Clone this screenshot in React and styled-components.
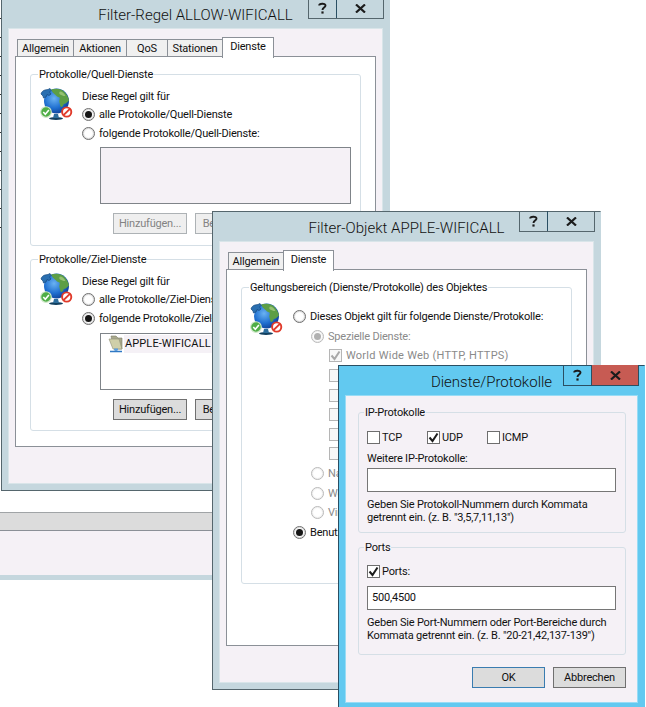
import React from 'react'
import styled, { createGlobalStyle } from 'styled-components'

const GlobalStyle = createGlobalStyle`
    html, body {
        margin: 0;
        height: 707px;
        overflow: hidden;
        background: #fff;
    }
    body {
        font-family: Roboto, "Open Sans", sans-serif;
        font-size: 11px;
        letter-spacing: -0.2px;
        color: #111;
    }
`

const Desktop = styled.div`
    position: relative;
    width: 646px;
    height: 707px;
    overflow: hidden;
`

// windows on a desktop, their place is the content
const Window = styled.section`
    position: absolute;
    left: ${p => p.$x}px;
    top: ${p => p.$y}px;
    width: ${p => p.$w}px;
    height: ${p => p.$h}px;
    box-sizing: border-box;
    display: flex;
    flex-direction: column;
    background: ${p => p.$frame};
    border: 1px solid ${p => p.$edge};
    border-right-color: ${p => p.$frame};
`

const TitleBar = styled.header`
    height: 30px;
    box-sizing: border-box;
    padding-top: 2px;
    flex: none;
    display: flex;
    align-items: center;
    justify-content: center;
    font-size: 15px;
    font-weight: 300;
    letter-spacing: 0;
    color: #111;
`

const Caption = styled.div`
    position: absolute;
    top: -1px;
    right: 5px;
    display: flex;
    height: 21px;
    box-sizing: border-box;
    border: 1px solid ${p => p.$edge};
    border-top: none;
`

const CaptionButton = styled.div`
    width: ${p => p.$wide ? 46 : 27}px;
    display: flex;
    align-items: center;
    justify-content: center;
    background: ${p => p.$bg || 'transparent'};
    & + & { border-left: 1px solid ${p => p.$edge}; }
    svg { display: block; }
`

const Client = styled.div`
    flex: 1;
    min-height: 0;
    margin: 0 7px 7px;
    box-sizing: border-box;
    padding: ${p => p.$pad};
    background: #f5f1f6;
    outline: 1px solid rgba(255, 255, 255, 0.35);
`

const TabStrip = styled.div`
    display: flex;
    align-items: flex-end;
    height: 21px;
    padding-left: 2px;
    position: relative;
    z-index: 1;
`

const Tab = styled.div`
    box-sizing: border-box;
    width: ${p => p.$w}px;
    height: ${p => p.$active ? 21 : 18}px;
    margin-bottom: ${p => p.$active ? -1 : 0}px;
    display: flex;
    align-items: center;
    justify-content: center;
    padding-bottom: ${p => p.$active ? 4 : 0}px;
    background: ${p => p.$active ? '#fff' : '#f0f0f0'};
    border: 1px solid #8b9097;
    border-bottom: ${p => p.$active ? 'none' : '1px solid #8b9097'};
    margin-right: ${p => p.$active ? 0 : -1}px;
`

const TabPage = styled.div`
    box-sizing: border-box;
    height: ${p => p.$h}px;
    background: #fff;
    border: 1px solid #8b9097;
    padding: 9px 14px 0;
    margin-top: -1px;
`

const Group = styled.fieldset`
    box-sizing: border-box;
    height: ${p => p.$h}px;
    margin: 0 0 ${p => p.$after || 0}px;
    padding: ${p => p.$pad};
    border: 1px solid #d5dfe6;
    border-radius: 3px;
    min-width: 0;
`

const Legend = styled.legend`
    height: 16px;
    line-height: 18px;
    padding: 0 1px;
    margin-left: ${p => p.$ml}px;
    white-space: nowrap;
`

const GroupBody = styled.div`
    display: flex;
    gap: ${p => p.$gap}px;
    align-items: flex-start;
`

const Rows = styled.div`
    flex: 1;
    min-width: 0;
    padding-top: ${p => p.$top || 0}px;
`

const IconCell = styled.div`
    flex: none;
    padding-top: ${p => p.$top}px;
`

const Line = styled.div`
    height: 16px;
    line-height: 17px;
    white-space: nowrap;
    margin-top: ${p => p.$top || 0}px;
`

const OptionRow = styled.div`
    display: flex;
    align-items: center;
    gap: 4px;
    height: ${p => p.$h || 18}px;
    margin-top: ${p => p.$top || 0}px;
    padding-left: ${p => p.$indent || 0}px;
    white-space: nowrap;
    color: ${p => p.$off ? '#8a8a8a' : 'inherit'};
`

const WideLabel = styled.span`
    letter-spacing: 0.25px;
`

const RadioMark = styled.span`
    flex: none;
    box-sizing: border-box;
    width: 13px;
    height: 13px;
    border-radius: 50%;
    display: flex;
    align-items: center;
    justify-content: center;
    border: 1px solid ${p => p.$off ? '#b9b9b9' : '#6e6e6e'};
    background: #fff;
    box-shadow: inset 0 0 1px 1px ${p => p.$off ? '#eee' : '#d8d8d8'};
    &::after {
        content: '';
        display: ${p => p.$on ? 'block' : 'none'};
        width: 7px;
        height: 7px;
        border-radius: 50%;
        background: ${p => p.$off ? '#b0b0b0' : '#151515'};
    }
`

const CheckMark = styled.span`
    flex: none;
    box-sizing: border-box;
    width: 13px;
    height: 13px;
    display: flex;
    align-items: center;
    justify-content: center;
    border: 1px solid ${p => p.$off ? '#b5b5b5' : '#6e6e6e'};
    background: ${p => p.$off ? '#f8f8f8' : '#fff'};
    svg { display: block; }
`

const ListBox = styled.div`
    box-sizing: border-box;
    height: ${p => p.$h}px;
    margin: ${p => p.$top}px 0 0 18px;
    background: ${p => p.$off ? '#f5f1f6' : '#fff'};
    border: 1px solid #7f8489;
    padding: 1px 6px;
`

const ListItem = styled.div`
    display: flex;
    align-items: center;
    height: 18px;
    white-space: nowrap;
`

const ItemText = styled.span`
    background: #f5f1f6;
    padding: 0 8px 0 1px;
    height: 18px;
    line-height: 18px;
    letter-spacing: 0.1px;
`

const ButtonRow = styled.div`
    display: flex;
    justify-content: flex-end;
    gap: 8px;
    margin-top: ${p => p.$top}px;
`

const Button = styled.div`
    box-sizing: border-box;
    width: ${p => p.$w || 74}px;
    height: 21px;
    display: flex;
    align-items: center;
    justify-content: center;
    background: ${p => p.$off ? '#efefef' : '#dcdcdc'};
    border: 1px solid ${p => p.$off ? '#adb2b5' : p.$primary ? '#3a7cb0' : '#707070'};
    color: ${p => p.$off ? '#838383' : '#111'};
`

const CheckRow = styled.div`
    display: flex;
    margin-top: ${p => p.$top || 0}px;
`

const CheckItem = styled.div`
    width: ${p => p.$w || 60}px;
    height: 18px;
    display: flex;
    align-items: center;
    gap: 2px;
`

const TextField = styled.div`
    box-sizing: border-box;
    height: 24px;
    margin-top: ${p => p.$top}px;
    background: #fff;
    border: 1px solid #767676;
    padding: 0 4px;
    line-height: 22px;
`

const Help = styled.p`
    margin: ${p => p.$top}px 0 0;
    line-height: 13px;
    white-space: nowrap;
`

const StubWindow = styled.div`
    position: absolute;
    left: 0;
    top: 512px;
    width: 212px;
    height: 68px;
    box-sizing: border-box;
    background: #f5f1f6;
    border-top: 1px solid #a0a4a6;
    border-bottom: 5px solid #c5d7de;
    &::before {
        content: '';
        display: block;
        height: 17px;
        background: #dcdcdc;
        border-bottom: 1px solid #8b9097;
    }
`

// ticks of the window behind, showing along the left edge
const EdgeTicks = styled.div`
    position: absolute;
    left: 0;
    top: 0;
    width: 1px;
    height: 236px;
    background: repeating-linear-gradient(to bottom, transparent 0 18px, #333 18px 19px);
`

const Globe = () => (
    <svg width="33" height="34" viewBox="0 0 33 34" style={{ display: 'block' }}>
        <defs>
            <radialGradient id="sea" cx="40%" cy="40%" r="65%">
                <stop offset="0" stopColor="#6ab2f2" />
                <stop offset="0.6" stopColor="#1f6fd0" />
                <stop offset="1" stopColor="#0d3f95" />
            </radialGradient>
        </defs>
        <ellipse cx="16" cy="30.5" rx="7" ry="1.5" fill="#12405f" />
        <path d="M13 30h6l-1-4h-4z" fill="#2c6d9c" />
        <circle cx="16.5" cy="13" r="12.5" fill="url(#sea)" />
        <path d="M11 1.500c5-1.500 10-1 13 2 2.500 2.500 4.500 5.500 5 9-1.500 1-2.500 3-5 3.500-1 .3-.5 2.500-2.500 3-1.500 0-1.500-3-2-4.500-1-2 1-3 0-5-2-.5-3-1.500-4.500-3-1.500-1.500-3-2.500-4-5z" fill="#5d9e45" />
        <path d="M20 3.500c2 0 4.500 2 5.500 4.500-2 .5-3.500-1-5.500-1.500-1-1-1-2 0-3z" fill="#95c172" />
        <path d="M1 6c.5-2 2-3.500 4-4l3-.5 2-1 1 2-1.500 1.500 1.500 2-2 1.500-2-1-1 2.500-2.500 1-.5-2z" fill="#2a6fb0" stroke="#14497f" strokeWidth="0.7" />
        <circle cx="6" cy="24" r="5.300" fill="#4fae46" stroke="#cfe6c8" strokeWidth="1.100" />
        <path d="M3.300 24l2 2.200 3.600-4.200" fill="none" stroke="#fff" strokeWidth="1.600" />
        <circle cx="26.700" cy="24" r="4.600" fill="#fff" stroke="#e03a2a" strokeWidth="1.900" />
        <path d="M23.500 27.200l6.400-6.400" stroke="#e03a2a" strokeWidth="1.900" />
    </svg>
)

const FolderNet = () => (
    <svg width="17" height="18" viewBox="0 0 17 18" style={{ flex: 'none', display: 'block' }}>
        <path d="M4 1h5l2 2h4v11H7z" fill="#a9a98c" stroke="#7c7c68" strokeWidth="0.6" />
        <path d="M2 4h10l3 10H6z" fill="#cfcfa9" stroke="#8e8e75" strokeWidth="0.6" />
        <path d="M9 14v2M3 16.500h12" stroke="#2f78c4" strokeWidth="1.300" />
        <rect x="7" y="13.500" width="4" height="2" fill="#5fa0de" />
    </svg>
)

const Tick = ({ color = '#1c1c1c' }) => (
    <svg width="11" height="11" viewBox="0 0 11 11">
        <path d="M1.500 5.500l3 3.500 5-7.500" fill="none" stroke={color} strokeWidth="2" />
    </svg>
)

const CaptionControls = ({ edge, closeBg }) => (
    <Caption $edge={edge}>
        <CaptionButton $edge={edge}>
            <svg width="9" height="12" viewBox="0 0 9 12">
                <path d="M1.200 3.500C1.200 1.500 7.500.800 7.500 3.500c0 2-3 2.200-3 4.500" fill="none" stroke="#1c1c1c" strokeWidth="1.900" />
                <rect x="3.400" y="9.400" width="2.200" height="2.200" fill="#1c1c1c" />
            </svg>
        </CaptionButton>
        <CaptionButton $edge={edge} $wide $bg={closeBg}>
            <svg width="11" height="9" viewBox="0 0 11 9">
                <path d="M1 .5l9 8M10 .5l-9 8" stroke="#1c1c1c" strokeWidth="2.200" />
            </svg>
        </CaptionButton>
    </Caption>
)

const Radio = ({ on, off, indent, label }) => (
    <OptionRow $indent={indent} $off={off} $h={19.6}>
        <RadioMark $on={on} $off={off} />
        {label}
    </OptionRow>
)

const RuleGroup = ({ title, after, anyLabel, someLabel, anyOn, listTop, listHeight, off, children }) => (
    <Group $h={180} $after={after} $pad="0 9px">
        <Legend $ml={-2}>{title}</Legend>
        <GroupBody $gap={9}>
            <IconCell $top={6}><Globe /></IconCell>
            <Rows $top={6}>
                <Line>Diese Regel gilt für</Line>
                <OptionRow $top={1}>
                    <RadioMark $on={anyOn} />
                    {anyLabel}
                </OptionRow>
                <OptionRow $top={1}>
                    <RadioMark $on={!anyOn} />
                    {someLabel}
                </OptionRow>
                <ListBox $h={listHeight} $top={listTop} $off={off}>{children}</ListBox>
                <ButtonRow $top={9}>
                    <Button $off={off}>Hinzufügen...</Button>
                    <Button $off={off}>Bearbeiten...</Button>
                    <Button $off={off}>{off ? null : 'Entfernen'}</Button>
                </ButtonRow>
            </Rows>
        </GroupBody>
    </Group>
)

const App = () => {
    const grey = { frame: '#c5d7de', edge: '#55666d' }
    return (
        <Desktop>
            <GlobalStyle />
            <EdgeTicks />
            <StubWindow />

            <Window $x={1} $y={-2} $w={389} $h={493} $frame={grey.frame} $edge={grey.edge}>
                <TitleBar>Filter-Regel ALLOW-WIFICALL</TitleBar>
                <CaptionControls edge={grey.edge} />
                <Client $pad="7px 6px 0">
                    <TabStrip>
                        <Tab $w={57}>Allgemein</Tab>
                        <Tab $w={54}>Aktionen</Tab>
                        <Tab $w={42}>QoS</Tab>
                        <Tab $w={56}>Stationen</Tab>
                        <Tab $w={52} $active>Dienste</Tab>
                    </TabStrip>
                    <TabPage $h={391}>
                        <RuleGroup
                            title="Protokolle/Quell-Dienste"
                            after={5}
                            anyLabel="alle Protokolle/Quell-Dienste"
                            someLabel="folgende Protokolle/Quell-Dienste:"
                            anyOn
                            listTop={5}
                            listHeight={57}
                            off
                        />
                        <RuleGroup
                            title="Protokolle/Ziel-Dienste"
                            anyLabel="alle Protokolle/Ziel-Dienste"
                            someLabel="folgende Protokolle/Ziel-Dienste:"
                            listTop={6}
                            listHeight={57}
                        >
                            <ListItem><FolderNet /><ItemText>APPLE-WIFICALL</ItemText></ListItem>
                        </RuleGroup>
                    </TabPage>
                </Client>
            </Window>

            <Window $x={212} $y={211} $w={389} $h={479} $frame={grey.frame} $edge={grey.edge}>
                <TitleBar>Filter-Objekt APPLE-WIFICALL</TitleBar>
                <CaptionControls edge={grey.edge} />
                <Client $pad="7px 6px 0">
                    <TabStrip>
                        <Tab $w={56}>Allgemein</Tab>
                        <Tab $w={51} $active>Dienste</Tab>
                    </TabStrip>
                    <TabPage $h={377}>
                        <Group $h={305} $pad="0 9px 0 8px">
                            <Legend $ml={-1}>Geltungsbereich (Dienste/Protokolle) des Objektes</Legend>
                            <GroupBody $gap={10}>
                                <IconCell $top={8}><Globe /></IconCell>
                                <Rows $top={12}>
                                    <Radio label="Dieses Objekt gilt für folgende Dienste/Protokolle:" />
                                    <Radio indent={18} on off label="Spezielle Dienste:" />
                                    <OptionRow $indent={36} $off $h={19.6}>
                                        <CheckMark $off><Tick color="#a8a8a8" /></CheckMark>
                                        <WideLabel>World Wide Web (HTTP, HTTPS)</WideLabel>
                                    </OptionRow>
                                    {[0, 1, 2, 3, 4].map(i => (
                                        <OptionRow key={i} $indent={36} $off $h={19.6}><CheckMark $off /></OptionRow>
                                    ))}
                                    <Radio indent={18} off label="Namen" />
                                    <Radio indent={18} off label="Web" />
                                    <Radio indent={18} off label="Virtuell" />
                                    <Radio on label="Benutzerdefiniert" />
                                </Rows>
                            </GroupBody>
                        </Group>
                    </TabPage>
                </Client>
            </Window>

            <Window $x={338} $y={365} $w={307} $h={345} $frame="#62c9f0" $edge="#2a4f63">
                <TitleBar>Dienste/Protokolle</TitleBar>
                <CaptionControls edge="#2a4f63" closeBg="#c75b53" />
                <Client $pad="8px 11px 0 12px">
                    <Group $h={129} $after={6} $pad="0 9px 0 8px">
                        <Legend $ml={-3}>IP-Protokolle</Legend>
                        <CheckRow $top={8}>
                            <CheckItem><CheckMark />TCP</CheckItem>
                            <CheckItem><CheckMark><Tick /></CheckMark>UDP</CheckItem>
                            <CheckItem><CheckMark />ICMP</CheckItem>
                        </CheckRow>
                        <Line $top={4}>Weitere IP-Protokolle:</Line>
                        <TextField $top={2} />
                        <Help $top={6}>
                            Geben Sie Protokoll-Nummern durch Kommata<br />
                            getrennt ein. (z. B. "3,5,7,11,13")
                        </Help>
                    </Group>
                    <Group $h={116} $pad="0 9px 0 8px">
                        <Legend $ml={-3}>Ports</Legend>
                        <CheckRow $top={7}>
                            <CheckItem $w={100}><CheckMark><Tick /></CheckMark>Ports:</CheckItem>
                        </CheckRow>
                        <TextField $top={6}>500,4500</TextField>
                        <Help $top={6}>
                            Geben Sie Port-Nummern oder Port-Bereiche durch<br />
                            Kommata getrennt ein. (z. B. "20-21,42,137-139")
                        </Help>
                    </Group>
                    <ButtonRow $top={12}>
                        <Button $primary $w={73}>OK</Button>
                        <Button $w={73}>Abbrechen</Button>
                    </ButtonRow>
                </Client>
            </Window>
        </Desktop>
    )
}

export default App
